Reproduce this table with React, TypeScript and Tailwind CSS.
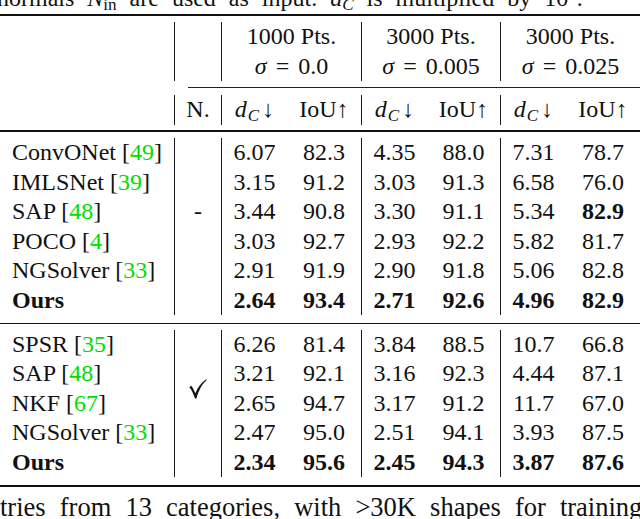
import React from "react";

type Row = { name: string; cite?: string; v: string[]; bold?: number[]; all?: boolean };

const block1: Row[] = [
  { name: "ConvONet", cite: "49", v: ["6.07", "82.3", "4.35", "88.0", "7.31", "78.7"] },
  { name: "IMLSNet", cite: "39", v: ["3.15", "91.2", "3.03", "91.3", "6.58", "76.0"] },
  { name: "SAP", cite: "48", v: ["3.44", "90.8", "3.30", "91.1", "5.34", "82.9"], bold: [5] },
  { name: "POCO", cite: "4", v: ["3.03", "92.7", "2.93", "92.2", "5.82", "81.7"] },
  { name: "NGSolver", cite: "33", v: ["2.91", "91.9", "2.90", "91.8", "5.06", "82.8"] },
  { name: "Ours", v: ["2.64", "93.4", "2.71", "92.6", "4.96", "82.9"], all: true },
];

const block2: Row[] = [
  { name: "SPSR", cite: "35", v: ["6.26", "81.4", "3.84", "88.5", "10.7", "66.8"] },
  { name: "SAP", cite: "48", v: ["3.21", "92.1", "3.16", "92.3", "4.44", "87.1"] },
  { name: "NKF", cite: "67", v: ["2.65", "94.7", "3.17", "91.2", "11.7", "67.0"] },
  { name: "NGSolver", cite: "33", v: ["2.47", "95.0", "2.51", "94.1", "3.93", "87.5"] },
  { name: "Ours", v: ["2.34", "95.6", "2.45", "94.3", "3.87", "87.6"], all: true },
];

const cols = "grid grid-cols-[174px_47px_140px_139px_140px]";

function Cite({ n }: { n: string }) {
  return (
    <>
      [<span className="text-[#00dd00]">{n}</span>]
    </>
  );
}

function DC() {
  return (
    <span>
      <i>d</i>
      <sub className="italic text-[17px] ml-[1px]">C</sub>
      <span className="ml-[3px]">↓</span>
    </span>
  );
}

function Sigma({ v }: { v: string }) {
  return (
    <div>
      <i>σ</i>
      <span className="mx-[9px]">=</span>
      {v}
    </div>
  );
}

function Pair({ a, b, ba, bb }: { a: React.ReactNode; b: React.ReactNode; ba?: boolean; bb?: boolean }) {
  return (
    <div className="grid grid-cols-[65px_1fr] border-l border-[#1a1a1a] text-center">
      <span className={ba ? "font-bold" : ""}>{a}</span>
      <span className={bb ? "font-bold" : ""}>{b}</span>
    </div>
  );
}

function Block({ rows, mark }: { rows: Row[]; mark: React.ReactNode }) {
  const isBold = (r: Row, i: number) => r.all || (r.bold ?? []).includes(i);
  return (
    <div className={`${cols} pb-[2.5px]`}>
      {rows.map((r, ri) => (
        <React.Fragment key={r.name + ri}>
          <div className={`pl-[12px] whitespace-nowrap ${r.all ? "font-bold" : ""}`}>
            {r.name}
            {r.cite && (
              <>
                {" "}
                <Cite n={r.cite} />
              </>
            )}
          </div>
          {ri === 0 && (
            <div
              className={`border-l border-[#1a1a1a] ${rows.length === 6 ? "row-span-6" : "row-span-5"}`}
            >
              {mark}
            </div>
          )}
          <Pair a={r.v[0]} b={r.v[1]} ba={isBold(r, 0)} bb={isBold(r, 1)} />
          <Pair a={r.v[2]} b={r.v[3]} ba={isBold(r, 2)} bb={isBold(r, 3)} />
          <Pair a={r.v[4]} b={r.v[5]} ba={isBold(r, 4)} bb={isBold(r, 5)} />
        </React.Fragment>
      ))}
    </div>
  );
}

function Check() {
  return (
    <svg width="18" height="20" viewBox="0 0 18 20" className="ml-[14px] mt-[49px]">
      <path
        d="M0.3 8.2 L2.2 6.8 C3.4 8 4.6 10.6 6.4 14.2 C8.8 8.6 12.4 3.4 17.2 0.3 L17.7 0.9 C13 5.2 9.6 11.2 7.4 19.6 L6.0 19.6 C4.4 14.8 2.6 10.6 0.3 8.2 Z"
        fill="#111"
      />
    </svg>
  );
}

export default function App() {
  return (
    <div className="w-[640px] h-[519px] overflow-hidden bg-white text-[#111] font-['Liberation_Serif','Times_New_Roman',serif] text-[24px] leading-[29.5px]">
      {/* caption tail above */}
      <div className="h-[14px] overflow-hidden">
        <div className="mt-[-16px] ml-[-3px] whitespace-nowrap [word-spacing:7px]">
          normals <i>N</i>
          <sub className="text-[17px]">in</sub> are used as input. <i>d</i>
          <sub className="italic text-[17px]">C</sub> is multiplied by 10
          <sup className="text-[17px]">4</sup>.
        </div>
      </div>

      <div className="h-[2px] bg-[#111]" />
      <div className="h-[6px]" />

      {/* header */}
      <div className={`${cols} pb-[1px]`}>
        <div />
        <div className="border-l border-[#1a1a1a]" />
        <div className="border-l border-[#1a1a1a] text-center">
          <div>1000 Pts.</div>
          <Sigma v="0.0" />
        </div>
        <div className="border-l border-[#1a1a1a] text-center">
          <div>3000 Pts.</div>
          <Sigma v="0.005" />
        </div>
        <div className="border-l border-[#1a1a1a] text-center">
          <div>3000 Pts.</div>
          <Sigma v="0.025" />
        </div>
      </div>

      <div className="h-[5px]" />
      <div className="ml-[188px] h-[1px] bg-[#222]" />
      <div className="h-[7px]" />

      <div className={`${cols} h-[30px]`}>
        <div />
        <div className="border-l border-[#1a1a1a] text-center">N.</div>
        <Pair a={<DC />} b="IoU↑" />
        <Pair a={<DC />} b="IoU↑" />
        <Pair a={<DC />} b="IoU↑" />
      </div>

      <div className="h-[5px]" />
      <div className="h-[2px] bg-[#111]" />
      <div className="h-[6px]" />

      <Block rows={block1} mark={<div className="mt-[59px] text-center">-</div>} />

      <div className="h-[5px]" />
      <div className="h-[1px] bg-[#111]" />
      <div className="h-[6px]" />

      <Block rows={block2} mark={<Check />} />

      <div className="h-[5px]" />
      <div className="h-[2px] bg-[#111]" />
      <div className="h-[6px]" />

      <div className="whitespace-nowrap text-[26.5px] [word-spacing:7.5px]">
        tries from 13 categories, with &gt;30K shapes for training
      </div>
    </div>
  );
}
